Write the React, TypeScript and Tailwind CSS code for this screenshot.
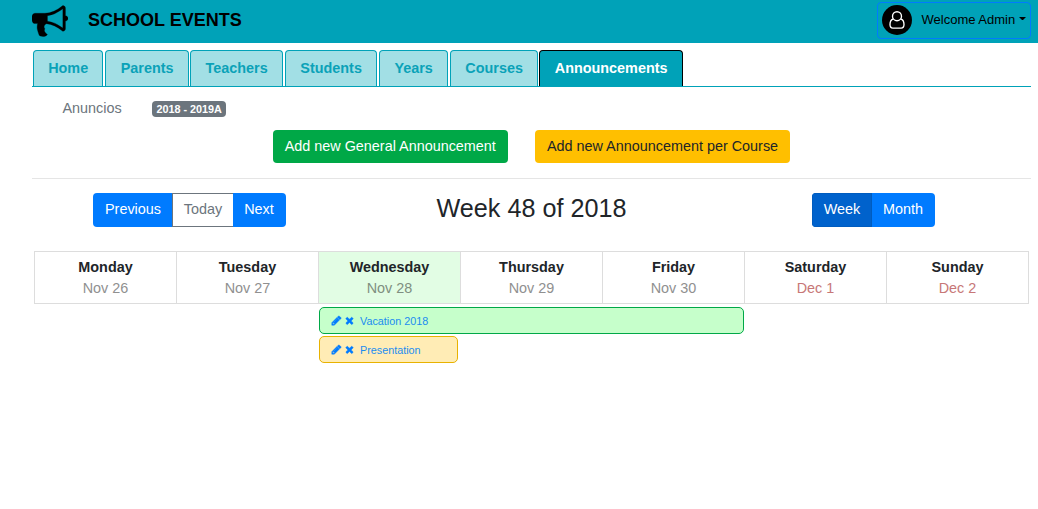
import React from "react";

type IconProps = { className: string };

const Bullhorn = ({ className }: IconProps) => (
  <svg viewBox="0 0 1792 1792" className={className} fill="currentColor" stroke="currentColor" strokeWidth="15">
    <path d="M1664 640q53 0 90.5 37.5t37.5 90.5-37.5 90.5-90.5 37.5v384q0 52-38 90t-90 38q-417-347-812-380-58 19-91 66t-31 100.5 40 92.5q-20 33-23 65.5t6 58 33.5 55 48 50 61.5 50.5q-29 58-111.5 83t-168.5 11.5-132-55.5q-7-23-29.5-87.5t-32-94.5-23-89-15-101 3.5-98.5 22-110.5h-122q-66 0-113-47t-47-113v-192q0-66 47-113t113-47h480q435 0 896-384 52 0 90 38t38 90v384zm-128 604v-954q-394 302-768 343v270q377 42 768 341z" />
  </svg>
);

const Pencil = ({ className }: IconProps) => (
  <svg viewBox="0 0 1792 1792" className={className} fill="currentColor" stroke="currentColor" strokeWidth="70">
    <path d="M491 1536l91-91-235-235-91 91v107h128v128h107zm523-928q0-22-22-22-10 0-17 7l-542 542q-7 7-7 17 0 22 22 22 10 0 17-7l542-542q7-7 7-17zm-54-192l416 416-832 832h-416v-416zm683 96q0 53-37 90l-166 166-416-416 166-165q36-38 90-38 53 0 91 38l235 234q37 39 37 91z" />
  </svg>
);

const Times = ({ className }: IconProps) => (
  <svg viewBox="0 0 1792 1792" className={className} fill="currentColor" stroke="currentColor" strokeWidth="70">
    <path d="M1490 1322q0 40-28 68l-136 136q-28 28-68 28t-68-28l-294-294-294 294q-28 28-68 28t-68-28l-136-136q-28-28-28-68t28-68l294-294-294-294q-28-28-28-68t28-68l136-136q28-28 68-28t68 28l294 294 294-294q28-28 68-28t68 28l136 136q28 28 28 68t-28 68l-294 294 294 294q28 28 28 68z" />
  </svg>
);

const UserOutline = ({ className }: IconProps) => (
  <svg viewBox="0 0 16 18" className={className} fill="none" stroke="currentColor" strokeWidth="1.35">
    <circle cx="8" cy="5.200" r="4.500" />
    <path d="M4.300 8C2 8.600 1 10.800 1 13.600c0 2 1.200 3.500 2.900 3.500h8.200c1.700 0 2.900-1.500 2.900-3.500 0-2.800-1-5-3.300-5.600" />
  </svg>
);

const tabs = [
  { name: "Home", size: "w-[70px] mr-[2px]" },
  { name: "Parents", size: "w-[84px] mr-[1px]" },
  { name: "Teachers", size: "w-[93px] mr-[2px]" },
  { name: "Students", size: "w-[92px] mr-[2px]" },
  { name: "Years", size: "w-[69px] mr-[2px]" },
  { name: "Courses", size: "w-[88px] mr-[1px]" },
  { name: "Announcements", size: "w-[144px]", active: true },
];

const days = [
  { name: "Monday", date: "Nov 26" },
  { name: "Tuesday", date: "Nov 27" },
  { name: "Wednesday", date: "Nov 28", today: true },
  { name: "Thursday", date: "Nov 29" },
  { name: "Friday", date: "Nov 30" },
  { name: "Saturday", date: "Dec 1", weekend: true },
  { name: "Sunday", date: "Dec 2", weekend: true },
];

const Event = ({ title, className }: { title: string; className: string }) => (
  <div className={`flex h-[27px] items-center rounded-[5px] border pl-[11px] text-[10.800px] text-[#007bff] ${className}`}>
    <Pencil className="h-[11px] w-[11px]" />
    <Times className="ml-[2px] h-[11px] w-[11px]" />
    <span className="ml-[5px] pt-[2px] text-[#1b8cf0]">{title}</span>
  </div>
);

export default function App() {
  return (
    <div className="h-[509px] w-full overflow-hidden bg-white font-['Liberation_Sans',Arial,sans-serif] text-[14.400px] leading-[21.600px] text-[#212529]">
      <header className="flex h-[43px] items-start bg-[#00a2b8] pl-[32px] pr-[7px] text-black">
        <Bullhorn className="mt-[3px] h-[36px] w-[36px]" />
        <h1 className="ml-[20px] mt-[9px] text-[18px] font-bold leading-[22px]">SCHOOL EVENTS</h1>
        <button className="ml-auto mt-[2px] flex h-[37px] w-[154px] items-center rounded-[4px] border border-[#007bff] pb-px pl-[4px] text-[13px]">
          <span className="flex h-[30px] w-[30px] items-center justify-center rounded-full bg-black text-white">
            <UserOutline className="h-[18px] w-[16px]" />
          </span>
          <span className="-mt-px ml-[9.500px] whitespace-nowrap">Welcome Admin</span>
          <svg viewBox="0 0 7 3" className="mb-[3px] ml-[3.500px] h-[3px] w-[7px]" fill="currentColor">
            <path d="M0 0h7L3.500 3.500z" />
          </svg>
        </button>
      </header>

      <nav className="ml-[32px] mr-[7px] mt-[7px] flex h-[37px] border-b border-[#00a2b8] pl-px">
        {tabs.map((tab) => (
          <a
            key={tab.name}
            className={`h-[36px] shrink-0 rounded-t-[4px] border border-b-0 pl-[0.300px] pt-[7px] text-center font-bold ${tab.size} ${
              tab.active ? "border-black bg-[#00a2b8] text-white" : "border-[#00a2b8] bg-[#a2dfe5] text-[#0aa2b8]"
            }`}
          >
            {tab.name}
          </a>
        ))}
      </nav>

      <main className="ml-[32px] mr-[7px]">
        <div className="flex h-[43px] items-start pl-[30.500px] pt-[11px] text-[#6c757d]">
          <span>Anuncios</span>
          <span className="ml-[30px] mt-[3px] flex h-[16px] w-[74px] items-center justify-center rounded-[4px] bg-[#6c757d] pl-px pt-px text-[10.800px] font-bold text-white">
            2018 - 2019A
          </span>
        </div>
        <div className="flex h-[48px] gap-[27px] pl-[241px]">
          <button className="h-[33px] w-[235px] rounded-[4px] bg-[#00a847] pr-[0.500px] text-white">Add new General Announcement</button>
          <button className="h-[33px] w-[255px] rounded-[4px] bg-[#ffbf00] text-[#212529]">Add new Announcement per Course</button>
        </div>
        <hr className="border-[#e5e5e5]" />

        <div className="flex h-[72px] items-start pt-[14px]">
          <div className="ml-[61px] flex h-[34px] w-[193px] overflow-hidden rounded-[4px] text-white">
            <button className="w-[79px] bg-[#007bff] pl-px">Previous</button>
            <button className="w-[61px] border border-r-0 border-[#6c757d] bg-white text-[#6c757d]">Today</button>
            <button className="flex-1 bg-[#007bff] pr-px">Next</button>
          </div>
          <h2 className="flex h-[30px] w-[491px] items-center justify-center text-[25.200px] leading-[30px]">Week 48 of 2018</h2>
          <div className="ml-[35px] flex h-[34px] w-[123px] overflow-hidden rounded-[4px] text-white">
            <button className="w-[60px] border border-[#005cbf] bg-[#0062cc]">Week</button>
            <button className="flex-1 bg-[#007bff] pr-px">Month</button>
          </div>
        </div>

        <div className="ml-[2px] flex h-[53px] w-[995px] border border-r-0 border-[#dddddd] text-center">
          {days.map((day) => (
            <div key={day.name} className={`w-[142px] shrink-0 border-r border-[#dddddd] pt-[5px] leading-[21px] ${day.today ? "bg-[#e2fde4]" : ""}`}>
              <div className="font-bold">{day.name}</div>
              <div className={day.weekend ? "text-[#c77777]" : day.today ? "text-[#7f8f80]" : "text-[#909090]"}>{day.date}</div>
            </div>
          ))}
        </div>
        <div className="ml-[287px] mt-[3px] flex flex-col gap-[2px]">
          <Event title="Vacation 2018" className="w-[425px] border-[#00a847] bg-[#c6ffcb]" />
          <Event title="Presentation" className="w-[139px] border-[#e8b200] bg-[#ffecb5]" />
        </div>
      </main>
    </div>
  );
}
